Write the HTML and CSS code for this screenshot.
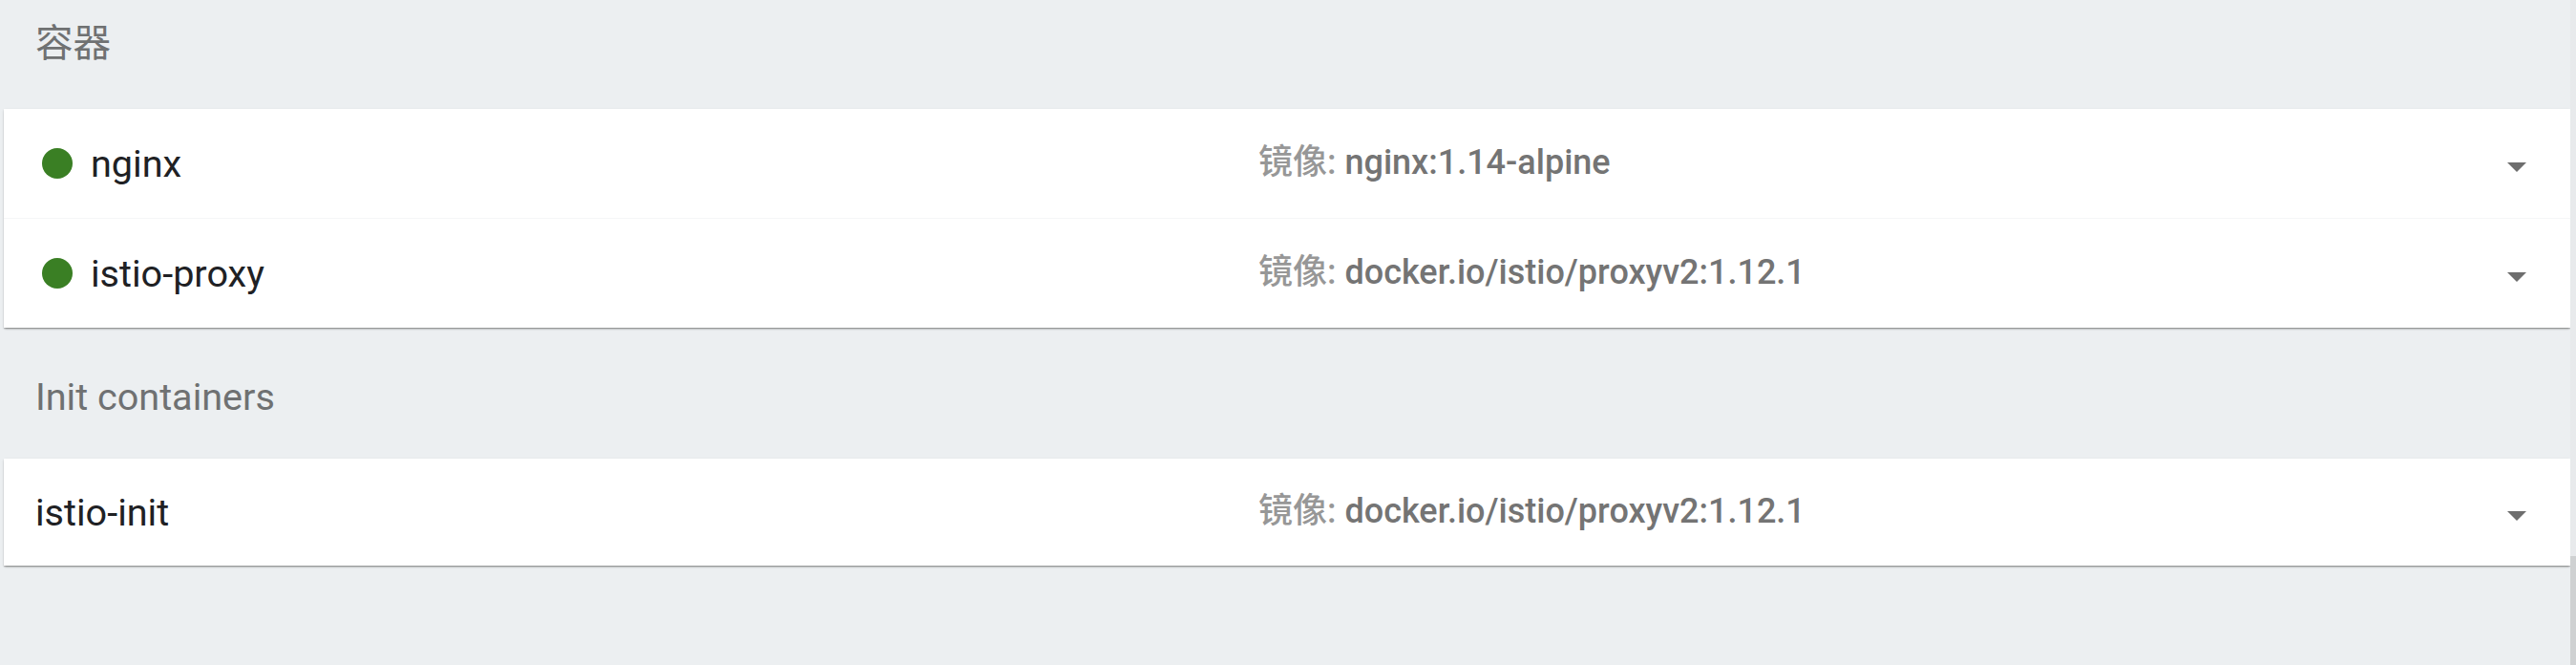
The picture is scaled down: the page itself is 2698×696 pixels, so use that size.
FILE: index.html
```html
<!DOCTYPE html>
<html lang="zh">
<head>
<meta charset="utf-8">
<title>容器</title>
<link rel="stylesheet" href="styles.css">
</head>
<body>
<div class="page">
  <section class="group group-main">
    <h2 class="group-title">容器</h2>
    <div class="card">
      <div class="row">
        <div class="name"><span class="dot"></span>nginx</div>
        <div class="image"><span class="label">镜像:</span> <span class="value">nginx:1.14-alpine</span></div>
        <svg class="caret" viewBox="0 0 24 24"><path d="M7 10l5 5 5-5z"/></svg>
      </div>
      <div class="row">
        <div class="name"><span class="dot"></span>istio-proxy</div>
        <div class="image"><span class="label">镜像:</span> <span class="value">docker.io/istio/proxyv2:1.12.1</span></div>
        <svg class="caret" viewBox="0 0 24 24"><path d="M7 10l5 5 5-5z"/></svg>
      </div>
    </div>
  </section>
  <section class="group group-init">
    <h2 class="group-title">Init containers</h2>
    <div class="card">
      <div class="row row-init">
        <div class="name">istio-init</div>
        <div class="image"><span class="label">镜像:</span> <span class="value">docker.io/istio/proxyv2:1.12.1</span></div>
        <svg class="caret" viewBox="0 0 24 24"><path d="M7 10l5 5 5-5z"/></svg>
      </div>
    </div>
  </section>
  <div class="scrollbar"><div class="thumb"></div></div>
</div>
</body>
</html>
```
FILE: styles.css
```css
html, body {
  margin: 0;
  padding: 0;
  background: #eceff1;
}
body {
  font-family: Roboto, "Noto Sans CJK SC", sans-serif;
  height: 696px;
  overflow: hidden;
}
.page {
  position: relative;
  height: 696px;
  padding: 0 6px 0 4px;
  box-sizing: border-box;
}
.group-title {
  margin: 0;
  height: 48px;
  line-height: 48px;
  padding-left: 33px;
  font-size: 39.6px;
  font-weight: 400;
  color: #6f7172;
}
.group-main .group-title {
  padding-top: 22px;
  margin-bottom: 44px;
}
.group-init .group-title {
  margin-top: 49px;
  margin-bottom: 40px;
}
.card {
  background: #fff;
  box-shadow: 0 2px 2px -1px rgba(0,0,0,.32), 0 1px 1px 0 rgba(0,0,0,.12), 0 1px 3px 0 rgba(0,0,0,.10);
}
.row {
  display: grid;
  grid-template-columns: 1281px 1fr 48px;
  align-items: center;
  height: 114px;
  padding: 0 32px 0 33px;
}
.row + .row {
  border-top: 1px solid #f5f6f7;
}
.row-init {
  height: 112px;
}
.name {
  display: flex;
  align-items: center;
  font-size: 39.6px;
  color: #202124;
}
.dot {
  width: 32px;
  height: 32px;
  border-radius: 50%;
  background: #3a7f24;
  margin: 0 19px 0 7px;
  flex: none;
}
.image {
  font-size: 36px;
  line-height: 40px;
  white-space: nowrap;
  margin-top: -2px;
}
.label {
  color: #979797;
  font-weight: 500;
}
.value {
  color: #747474;
  font-weight: 500;
}
.caret {
  width: 48px;
  height: 48px;
  fill: #6e6e6e;
  margin-top: 6px;
}
.scrollbar {
  position: absolute;
  top: 0;
  right: 0;
  width: 6px;
  height: 696px;
  background: #e8eaec;
}
.thumb {
  position: absolute;
  top: 582px;
  left: 0;
  right: 0;
  bottom: 0;
  background: #cfd1d2;
}
```
